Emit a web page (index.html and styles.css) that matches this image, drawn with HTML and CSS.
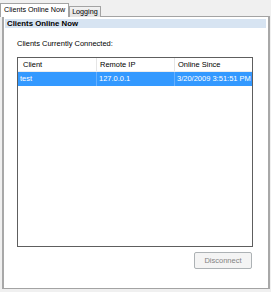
FILE: index.html
```html
<!DOCTYPE html>
<html lang="en">
<head>
  <meta charset="UTF-8" />
  <title>Clients Online Now</title>
  <link rel="stylesheet" href="styles.css">
</head>
<body>
  <div class="tabs">
    <div class="tab active">Clients Online Now</div>
    <div class="tab">Logging</div>
  </div>
  <div class="panel">
    <div class="title">Clients Online Now</div>
    <div class="content">
      <div class="label">Clients Currently Connected:</div>
      <div class="list">
        <div class="row head">
          <div class="cell first">Client</div>
          <div class="cell">Remote IP</div>
          <div class="cell">Online Since</div>
        </div>
        <div class="row selected">
          <div class="cell">test</div>
          <div class="cell">127.0.0.1</div>
          <div class="cell">3/20/2009 3:51:51 PM</div>
        </div>
      </div>
      <div class="actions">
        <button disabled>Disconnect</button>
      </div>
    </div>
  </div>
</body>
</html>
```

FILE: styles.css
```css
* {
  box-sizing: border-box;
}
body {
  margin: 0;
  width: 271px;
  height: 292px;
  background: #f0f0f0;
  font-family: 'Liberation Sans', Arial, sans-serif;
  font-size: 7.5px;
  color: #000;
  overflow: hidden;
}
.tabs {
  display: flex;
  align-items: flex-end;
  height: 16px;
  padding: 2px 0 0 0;
}
.tab {
  height: 11px;
  line-height: 10px;
  padding: 0 2px;
  margin-bottom: -1px;
  border: 1px solid #a3a3a3;
  border-bottom: none;
  background: linear-gradient(#f2f2f2, #e3e3e3);
  font-size: 7.2px;
  white-space: nowrap;
  position: relative;
}
.tab.active {
  height: 14px;
  line-height: 11px;
  padding: 0 3px;
  background: #fff;
  z-index: 1;
}
.panel {
  margin-left: 2px;
  width: 268px;
  height: 273px;
  background: #fff;
  border: 1px solid #a3a3a3;
  border-left: 2px solid #a8a8a8;
  border-right: 2px solid #a8a8a8;
  padding: 2px 2px 0 1px;
}
.title {
  height: 9px;
  line-height: 9px;
  padding-left: 2px;
  background: #d7e4f2;
  font-weight: bold;
  font-size: 7.8px;
}
.content {
  padding: 11px 14px 0 12px;
}
.label {
  height: 9px;
  line-height: 9px;
  margin-bottom: 9px;
}
.list {
  width: 236px;
  height: 190px;
  border: 1px solid #5e5e5e;
}
.row {
  display: grid;
  grid-template-columns: 79px 78px 1fr;
  height: 14px;
  line-height: 14px;
}
.row .cell {
  padding-left: 3px;
  border-right: 1px solid #e5e5e5;
  white-space: nowrap;
  overflow: hidden;
}
.row .cell:last-child {
  border-right: none;
}
.head {
  border-bottom: 1px solid #ededed;
}
.head .first {
  padding-left: 5px;
}
.selected {
  background: #3399ff;
  color: #fff;
}
.selected .cell {
  padding-left: 2px;
  border-right-color: #66b0ff;
}
.actions {
  display: flex;
  justify-content: flex-end;
  margin-top: 5px;
}
button {
  width: 58px;
  height: 17px;
  font-family: inherit;
  font-size: 7.5px;
  color: #838383;
  background: #f4f4f4;
  border: 1px solid #adb2b5;
  border-radius: 2px;
  padding: 0;
}
```
